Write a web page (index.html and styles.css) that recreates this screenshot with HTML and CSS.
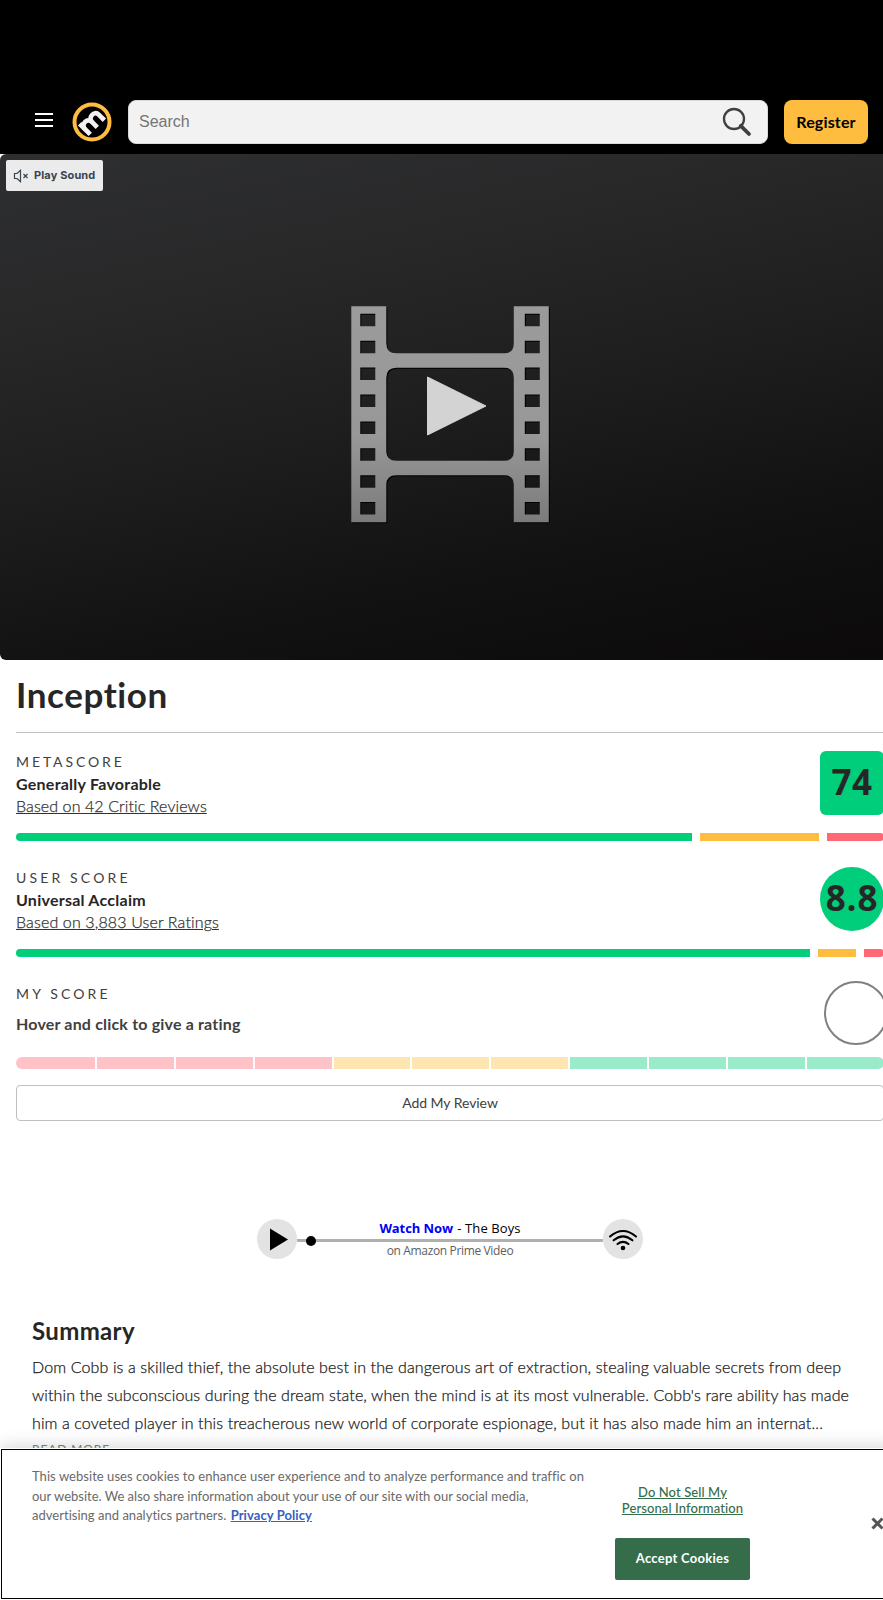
FILE: index.html
```html
<!DOCTYPE html>
<html lang="en">
<head>
<meta charset="utf-8">
<title>Inception</title>
<link rel="stylesheet" href="styles.css">
</head>
<body>
<header class="header">
  <svg class="menu" width="18" height="14" viewBox="0 0 18 14"><path d="M0 1h18M0 7h18M0 13h18" stroke="#fff" stroke-width="1.8"/></svg>
  <svg class="logo" width="40" height="40" viewBox="0 0 40 40">
    <circle cx="20" cy="20" r="17.5" fill="#000" stroke="#ffbd3f" stroke-width="4"/>
    <g transform="translate(20 20) rotate(-45)" fill="none" stroke="#f2f2f2" stroke-width="4.700"><path d="M-10 7.500V-7.500"/><path d="M-10 0C-10 -6.200 0 -6.800 0 -.5V7.500"/><path d="M0 0C0 -6.200 10 -6.800 10 -.5V7.500"/></g>
  </svg>
  <div class="search"><span>Search</span>
    <svg width="30" height="30" viewBox="0 0 30 30" fill="none" stroke="#404040"><circle cx="12" cy="12" r="10" stroke-width="2.3"/><path d="M18.8 18.8l8.2 8.2" stroke-width="3.8" stroke-linecap="round"/></svg>
  </div>
  <button class="register">Register</button>
</header>
<section class="video">
  <button class="sound"><svg width="16" height="14" viewBox="0 0 16 14" fill="none" stroke="#3a4350" stroke-width="1.2"><path d="M1.500 4.5h2.500L7.500 1.3v11.4L4 9.500H1.500z"/><path d="M10.500 5l4 4M14.500 5l-4 4"/></svg><span>Play Sound</span></button>
  <svg class="film" width="200" height="220" viewBox="0 0 200 220">
    <defs>
      <linearGradient id="metal" x1="0" y1="0" x2="0" y2="1"><stop offset="0" stop-color="#9b9b9b"/><stop offset=".6" stop-color="#989898"/><stop offset="1" stop-color="#7b7b7b"/></linearGradient>
      <path id="strip" fill-rule="evenodd" d="M0 0H35V37Q35 47 45 47H153Q162.500 47 162.500 37V0H197.500V216H162.500V178.500Q162.500 169 153 169H45Q35 169 35 178.500V216H0ZM45 61.500Q35 61.500 35 71.500V145Q35 154.500 45 154.500H153Q162.500 154.500 162.500 145V71.500Q162.500 61.500 153 61.500Z
      M9 7.500v12.500h15v-12.500zM9 34.400v12.500h15v-12.500zM9 61.300v12.500h15v-12.500zM9 88.200v12.500h15v-12.500zM9 115.100v12.500h15v-12.500zM9 142v12.500h15v-12.500zM9 168.900v12.500h15v-12.500zM9 195.800v12.500h15v-12.500z
      M173.500 7.500v12.500h15v-12.500zM173.500 34.400v12.500h15v-12.500zM173.500 61.300v12.500h15v-12.500zM173.500 88.200v12.500h15v-12.500zM173.500 115.100v12.500h15v-12.500zM173.500 142v12.500h15v-12.500zM173.500 168.900v12.500h15v-12.500zM173.500 195.800v12.500h15v-12.500z"/>
    </defs>
    <use href="#strip" x="1.300" y="1.300" fill="#000"/>
    <use href="#strip" x=".3" y=".3" fill="url(#metal)"/>
    <path d="M76.500 71L135 100L76.500 129Z" fill="#d3d3d3" stroke="#d3d3d3" stroke-linejoin="round"/>
  </svg>
</section>
<main class="product">
  <h1><span>Inception</span></h1>
  <section class="score">
    <div class="score-head"><div class="copy"><p class="label">METASCORE</p><p class="verdict v1">Generally Favorable</p><a class="based b1">Based on 42 Critic Reviews</a></div><div class="badge square">74</div></div>
    <div class="bar"><i class="g" style="width:676px"></i><i class="y" style="width:119px"></i><i class="r"></i></div>
  </section>
  <section class="score">
    <div class="score-head"><div class="copy"><p class="label user">USER SCORE</p><p class="verdict v2">Universal Acclaim</p><a class="based b2">Based on 3,883 User Ratings</a></div><div class="badge round">8.8</div></div>
    <div class="bar"><i class="g" style="width:794px"></i><i class="y" style="width:38px"></i><i class="r"></i></div>
  </section>
  <section class="mine">
    <div class="score-head"><div class="copy"><p class="label user">MY SCORE</p><p class="verdict hint">Hover and click to give a rating</p></div><div class="empty"></div></div>
    <div class="steps"><i class="lr first"></i><i class="lr"></i><i class="lr"></i><i class="lr"></i><i class="ly"></i><i class="ly"></i><i class="ly"></i><i class="lg"></i><i class="lg"></i><i class="lg"></i><i class="lg"></i></div>
    <button class="add"><span>Add My Review</span></button>
  </section>
</main>
<section class="watch">
  <svg width="40" height="40" viewBox="0 0 40 40"><circle cx="20" cy="20" r="20" fill="#e3e3e3"/><path d="M13 9.500L31 20.500L13 31.500Z"/></svg>
  <div class="track"><p class="show"><b>Watch Now</b> <span>- The Boys</span></p><div class="rail"><i></i></div><p class="on"><span>on Amazon Prime Video</span></p></div>
  <svg width="40" height="40" viewBox="0 0 40 40" fill="none" stroke="#000" stroke-width="2.100" stroke-linecap="round"><circle cx="20" cy="20" r="20" fill="#e3e3e3" stroke="none"/><path d="M7 17.500Q20 6.500 33 17.500M10.600 21.300Q20 13.300 29.400 21.300M14.500 25Q20 20.700 25.500 25"/><circle cx="20" cy="29" r="2.300" fill="#000" stroke="none"/></svg>
</section>
<section class="summary">
  <h2><span>Summary</span></h2>
  <p class="s1">Dom Cobb is a skilled thief, the absolute best in the dangerous art of extraction, stealing valuable secrets from deep</p>
  <p class="s2">within the subconscious during the dream state, when the mind is at its most vulnerable. Cobb's rare ability has made</p>
  <p class="s3">him a coveted player in this treacherous new world of corporate espionage, but it has also made him an internat...</p>
  <a class="more">READ MORE</a>
</section>
<aside class="cookies">
  <div class="cookie-box">
    <div class="notice"><p class="n1">This website uses cookies to enhance user experience and to analyze performance and traffic on</p><p class="n2">our website. We also share information about your use of our site with our social media,</p><p>advertising and analytics partners. <a>Privacy Policy</a></p></div>
    <div class="choices"><a class="dns">Do Not Sell My<br>Personal Information</a><button>Accept Cookies</button></div>
    <svg class="close" width="13" height="13" viewBox="0 0 13 13"><path d="M1.500 1.500l10 10M11.500 1.500l-10 10" stroke="#565656" stroke-width="3"/></svg>
  </div>
</aside>
</body>
</html>
```
FILE: styles.css
```css
* { box-sizing: border-box; }
html { overflow: hidden; background: #fff; }
body { margin: 0; width: 883px; height: 1600px; overflow: hidden; position: relative; font-family: Lato, "Open Sans", sans-serif; font-variant-ligatures: none; color: #262626; background: #fff; }
h1, h2, p { margin: 0; }
button { font-family: inherit; border: 0; padding: 0; }
p, a, button, span { white-space: nowrap; }

.header { height: 154px; padding: 100px 15px 10px 35px; background: #000; display: flex; align-items: center; }
.menu { margin: -4px 19px 0 0; }
.logo { margin-right: 16px; flex: none; }
.search { width: 640px; height: 44px; border: 1px solid #d8d8d8; border-radius: 8px; background: #f2f2f2; padding: 0 15px 0 10px; display: flex; align-items: center; justify-content: space-between; font: 16px "Liberation Sans", sans-serif; color: #757575; }
.register { width: 84px; height: 44px; margin-left: 16px; padding-bottom: 2px; border-radius: 8px; background: #ffbd3f; color: #000; font-size: 16px; font-weight: 700; letter-spacing: .15px; }

.video { height: 506px; padding: 6px; border-radius: 6px 0 0 6px; background: linear-gradient(168deg, #2e2f31 0%, #282829 25%, #1e1e1f 50%, #121212 75%, #0c0a0b 100%); }
.sound { width: 97px; height: 31px; border-radius: 2px; background: #ebebeb; color: #3a4350; font: 700 11px/31px Inter, sans-serif; letter-spacing: .13px; display: flex; align-items: center; gap: 5px; padding-left: 7px; }
.film { display: block; margin: 115px 0 0 345px; }

.product { width: 868px; margin-left: 16px; }
h1 { height: 73px; padding-top: 12px; border-bottom: 1px solid #bfbfbf; font-size: 35px; line-height: 44px; font-weight: 700; letter-spacing: .6px; }
.score { height: 116px; padding-top: 18px; }
.score-head { height: 64px; display: flex; justify-content: space-between; }
.copy { padding-top: 1px; }
.label { font-size: 14px; line-height: 20px; letter-spacing: 2.900px; color: #404040; }
.user { letter-spacing: 3.150px; }
.verdict { font-size: 16px; line-height: 24px; font-weight: 700; letter-spacing: .25px; }
.based { display: block; font-size: 16px; line-height: 20px; color: #333; -webkit-text-stroke: .25px #333; text-decoration: underline; text-decoration-thickness: 1px; font-weight: 300; letter-spacing: .1px; }
.b2 { letter-spacing: .14px; }
.badge { width: 64px; height: 64px; background: #00ce7a; font: 700 35px/62px "Open Sans", sans-serif; letter-spacing: .4px; text-align: center; }
.square { border-radius: 6px; }
.round { border-radius: 50%; letter-spacing: .9px; }
.bar { margin-top: 18px; height: 8px; display: flex; gap: 8px; border-radius: 4px; overflow: hidden; }
.bar i { flex: none; }
.bar .r { flex: 1; }
.g { background: #00ce7a; }
.y { background: #ffbd3f; }
.r { background: #ff6874; }
.mine { padding-top: 16px; }
.mine .copy { padding-top: 3px; }
.mine .hint { margin-top: 8px; color: #404040; letter-spacing: .18px; }
.empty { width: 64px; height: 64px; flex: none; margin-right: -4px; border: 2px solid #808080; border-radius: 50%; }
.steps { margin-top: 12px; height: 12px; display: flex; gap: 2px; border-radius: 6px; overflow: hidden; }
.steps i { flex: 1; }
.steps .first { flex: 0 0 78.800px; }
.lr { background: #ffc3c7; }
.ly { background: #ffe5b2; }
.lg { background: #99ebca; }
.add { width: 868px; height: 36px; margin-top: 16px; padding-bottom: 2px; display: block; background: #fff; border: 1px solid #bfbfbf; border-radius: 4px; color: #404040; font-size: 14px; letter-spacing: -.05px; }

.watch { margin: 98px 0 0 257px; width: 386px; display: flex; }
.track { width: 306px; height: 40px; text-align: center; font-family: "Open Sans", sans-serif; font-size: 13px; color: #000; }
.show { height: 20px; line-height: 19px; }
.show b { color: #0000f5; letter-spacing: -.1px; margin-right: 1px; }
.show span { letter-spacing: .1px; }
.rail { height: 3px; background: #b0b0b0; display: flex; align-items: center; padding-left: 9px; }
.rail i { width: 10px; height: 10px; border-radius: 50%; background: #000; }
.on { font-size: 12px; line-height: 17px; letter-spacing: -.35px; color: #606060; }

.summary { padding: 58px 0 0 32px; }
h2 { font-size: 24px; line-height: 28px; height: 36px; font-weight: 700; letter-spacing: .35px; }
.summary p { font-size: 16px; line-height: 28px; width: max-content; font-weight: 300; color: #1a1a1a; -webkit-text-stroke: .25px #1a1a1a; letter-spacing: .112px; }
.summary .s1 { letter-spacing: .125px; }
.more { display: block; margin-top: 4px; font-size: 12px; line-height: 16px; letter-spacing: .9px; color: #808080; }

.cookies { position: absolute; left: 0; top: 1448px; width: 900px; height: 152px; background: #fff; padding: 1px; box-shadow: 0 0 18px rgba(0,0,0,.2); }
.cookie-box { height: 150px; border: 1px solid #000; padding-left: 30px; display: flex; }
.notice { width: 583px; padding-top: 17px; font-size: 13px; line-height: 19.500px; color: #696969; }
.notice p { width: max-content; letter-spacing: .02px; }
.notice .n1 { letter-spacing: .05px; }
.notice .n2 { letter-spacing: -.01px; }
.notice a { color: #3860be; font-weight: 700; text-decoration: underline; margin-left: 1px; letter-spacing: .08px; }
.choices { width: 135px; padding-top: 34px; text-align: center; }
.dns { display: block; font-size: 13px; line-height: 16px; color: #356d4b; text-decoration: underline; font-weight: 500; letter-spacing: .1px; }
.choices button { display: block; width: 135px; height: 42px; margin-top: 22px; padding-bottom: 3px; border-radius: 2px; background: #356d4b; color: #fff; font-size: 13px; font-weight: 700; letter-spacing: .27px; }
.close { margin: 67px 0 0 121px; flex: none; }
```
